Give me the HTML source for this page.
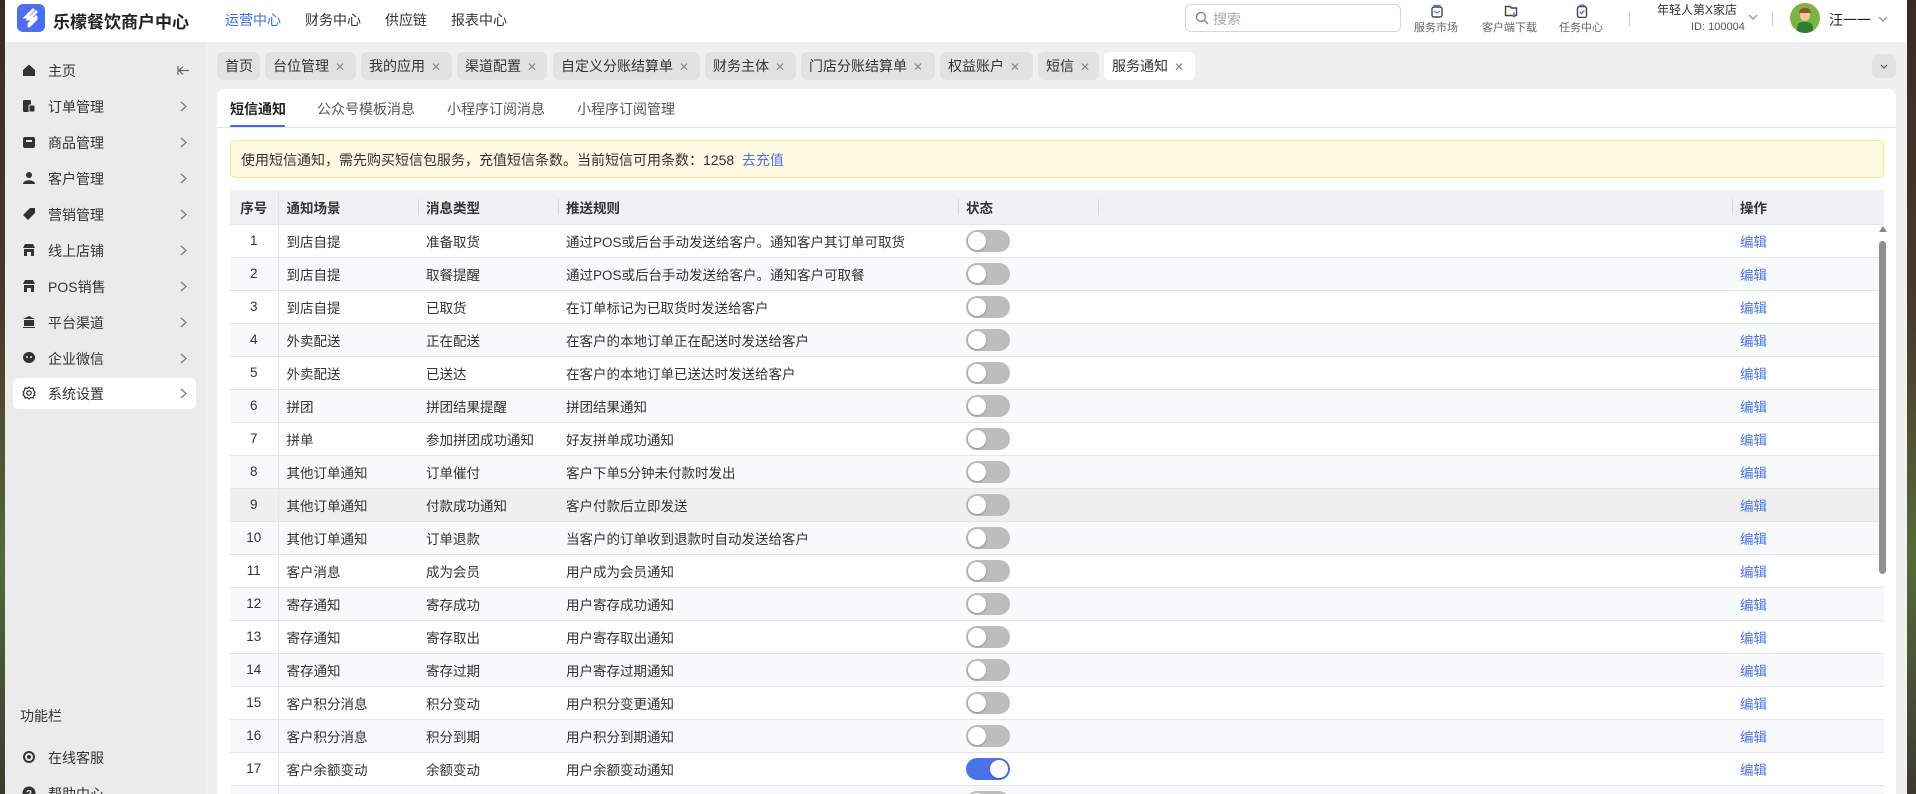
<!DOCTYPE html>
<html><head><meta charset="utf-8">
<style>
*{box-sizing:border-box;margin:0;padding:0}
body{width:1916px;height:794px;overflow:hidden;background:linear-gradient(180deg,#3a2a22,#4a3a2a 40%,#556a3a 70%,#3c3a30);font-family:"Liberation Sans","Noto Sans CJK SC",sans-serif;color:#333;position:relative}
.app{position:absolute;left:5px;top:0;width:1902px;height:794px;background:#f0f0f0;overflow:hidden}
.top{position:absolute;left:0;top:0;width:1902px;height:42px;background:#fff}
.abs{position:absolute;white-space:nowrap}
.side{position:absolute;left:0;top:42px;width:200px;height:752px;background:#ebebeb}
.mi{position:absolute;left:0;width:200px;height:31px;font-size:14px;color:#333}
.mi .ic{position:absolute;left:17px;top:8px;width:14px;height:14px}
.mi .t{position:absolute;left:43px;top:6px}
.mi .ch{position:absolute;left:175px;top:10px;width:7px;height:11px}
.tab{position:absolute;top:52px;height:28px;background:#e2e2e2;border-radius:6px;font-size:14px;line-height:28px;padding-left:8px;color:#333}
.tab .x{color:#888;font-size:12px;margin-left:6px}
.card{position:absolute;left:212px;top:89px;width:1679px;height:720px;background:#fff;border-radius:8px}
table{border-collapse:collapse;position:absolute;left:13px;top:101px;width:1654px;font-size:13.5px}
td,th{height:33px;border-bottom:1px solid #e6e6e6;text-align:left;padding-left:8px;font-weight:normal;white-space:nowrap}
th{height:34px;background:#f0f1f3;font-weight:bold;color:#333;position:relative}
th.s:before{content:"";position:absolute;left:0;top:9px;height:16px;border-left:1px solid #d8d8d8}
td.n,th.n{text-align:center;padding-left:0;border-right:1px solid #e6e6e6}
tr:nth-child(odd) td{background:#f8f9fa}
tr.h td{background:#efefef}
.sw{display:inline-block;width:44px;height:22px;border-radius:11px;background:#bdbdbd;position:relative;vertical-align:middle}
.sw:after{content:"";position:absolute;left:2px;top:2px;width:18px;height:18px;border-radius:50%;background:#fff;box-shadow:0 1px 2px rgba(0,0,0,.25)}
.sw.on{background:#4a74e6}.sw.on:after{left:24px}
.ed{color:#4a74e6}
</style></head><body>
<div class="app">
<div class="top">
  <div class="abs" style="left:12px;top:4px;width:28px;height:28px;border-radius:6px;background:#4d6ef0">
    <svg width="28" height="28" viewBox="0 0 28 28"><path d="M16 6 L9 13 L12 13 M16 15 L12 15 L19 8 M19 13 L12 20 M12 22 L19 15" stroke="#fff" stroke-width="3" fill="none" stroke-linecap="round"/></svg>
  </div>
  <div class="abs" style="left:48px;top:8px;font-size:17px;color:#222;font-weight:600">乐檬餐饮商户中心</div>
  <div class="abs" style="left:220px;top:10px;font-size:14px;color:#3d6be8">运营中心</div>
  <div class="abs" style="left:300px;top:10px;font-size:14px">财务中心</div>
  <div class="abs" style="left:380px;top:10px;font-size:14px">供应链</div>
  <div class="abs" style="left:446px;top:10px;font-size:14px">报表中心</div>
  <div class="abs" style="left:1180px;top:4px;width:216px;height:28px;border:1px solid #d6d6d6;border-radius:6px"></div>
  <svg class="abs" style="left:1190px;top:11px" width="14" height="14" viewBox="0 0 14 14"><circle cx="6" cy="6" r="4.5" stroke="#888" fill="none" stroke-width="1.4"/><path d="M9.5 9.5 L13 13" stroke="#888" stroke-width="1.4"/></svg>
  <div class="abs" style="left:1208px;top:9px;font-size:14px;color:#aaa">搜索</div>
  <svg class="abs" style="left:1425px;top:4px" width="14" height="14" viewBox="0 0 14 14"><rect x="2" y="3" width="10" height="10" rx="2" fill="none" stroke="#444" stroke-width="1.4"/><path d="M4 3 V1.5 H10 V3 M4 7 L7 9 L10 7" stroke="#4a74e6" fill="none" stroke-width="1.3"/></svg>
  <div class="abs" style="left:1409px;top:19px;font-size:11px;color:#666">服务市场</div>
  <svg class="abs" style="left:1499px;top:4px" width="14" height="14" viewBox="0 0 14 14"><path d="M1.5 2.5 H6 L7.5 4 H12.5 V11.5 H1.5 Z" fill="none" stroke="#444" stroke-width="1.4"/><path d="M10 8 V13 M8.5 11.5 L10 13 L11.5 11.5" stroke="#4a74e6" fill="none" stroke-width="1.3"/></svg>
  <div class="abs" style="left:1477px;top:19px;font-size:11px;color:#666">客户端下载</div>
  <svg class="abs" style="left:1570px;top:4px" width="14" height="14" viewBox="0 0 14 14"><rect x="2.5" y="2.5" width="9" height="11" rx="2" fill="none" stroke="#444" stroke-width="1.4"/><path d="M5 2.5 V1.2 H9 V2.5 M4.8 8 L6.5 9.6 L9.4 6.4" stroke="#4a74e6" fill="none" stroke-width="1.3"/></svg>
  <div class="abs" style="left:1554px;top:19px;font-size:11px;color:#666">任务中心</div>
  <div class="abs" style="left:1624px;top:12px;height:14px;border-left:1px solid #ccc"></div>
  <div class="abs" style="left:1652px;top:1px;font-size:12px;color:#333">年轻人第X家店</div>
  <div class="abs" style="left:1686px;top:21px;font-size:11px;color:#555">ID: 100004</div>
  <svg class="abs" style="left:1743px;top:14px" width="10" height="6" viewBox="0 0 10 6"><path d="M1 1 L5 5 L9 1" stroke="#888" fill="none" stroke-width="1.2"/></svg>
  <div class="abs" style="left:1767px;top:12px;height:14px;border-left:1px solid #ccc"></div>
  <div class="abs" style="left:1785px;top:3px;width:30px;height:30px;border-radius:50%;background:#7cb342;overflow:hidden">
    <div style="position:absolute;left:10px;top:6px;width:10px;height:12px;border-radius:5px;background:#f0c8a0"></div>
    <div style="position:absolute;left:9px;top:5px;width:12px;height:5px;border-radius:5px 5px 0 0;background:#8d5a2b"></div>
    <div style="position:absolute;left:7px;top:19px;width:16px;height:12px;border-radius:6px 6px 0 0;background:#2e7d32"></div>
  </div>
  <div class="abs" style="left:1824px;top:10px;font-size:14px;color:#222">汪一一</div>
  <svg class="abs" style="left:1873px;top:16px" width="10" height="6" viewBox="0 0 10 6"><path d="M1 1 L5 5 L9 1" stroke="#888" fill="none" stroke-width="1.2"/></svg>
</div>

<div class="side">
  <div class="mi" style="top:13px"><svg class="ic" viewBox="0 0 14 14"><path d="M1 7 L7 1.5 L13 7 V13 H1 Z" fill="#333"/></svg><span class="t">主页</span><svg class="abs" style="left:172px;top:10px" width="13" height="11" viewBox="0 0 13 11"><path d="M12 5.5 H2 M6 1.5 L2 5.5 L6 9.5 M1 1 V10" stroke="#666" fill="none" stroke-width="1.2"/></svg></div>
  <div class="mi" style="top:49px"><svg class="ic" viewBox="0 0 14 14"><rect x="1" y="1" width="8" height="12" rx="1" fill="#333"/><rect x="7" y="6" width="6" height="7" rx="1" fill="#333" stroke="#ebebeb"/></svg><span class="t">订单管理</span><svg class="ch" viewBox="0 0 7 11"><path d="M1 1 L6 5.5 L1 10" stroke="#777" fill="none" stroke-width="1.2"/></svg></div>
  <div class="mi" style="top:85px"><svg class="ic" viewBox="0 0 14 14"><rect x="1" y="2" width="12" height="11" rx="2" fill="#333"/><rect x="4" y="5" width="6" height="2" fill="#ebebeb"/></svg><span class="t">商品管理</span><svg class="ch" viewBox="0 0 7 11"><path d="M1 1 L6 5.5 L1 10" stroke="#777" fill="none" stroke-width="1.2"/></svg></div>
  <div class="mi" style="top:121px"><svg class="ic" viewBox="0 0 14 14"><circle cx="7" cy="4" r="3" fill="#333"/><path d="M1 13 C1 8 13 8 13 13 Z" fill="#333"/></svg><span class="t">客户管理</span><svg class="ch" viewBox="0 0 7 11"><path d="M1 1 L6 5.5 L1 10" stroke="#777" fill="none" stroke-width="1.2"/></svg></div>
  <div class="mi" style="top:157px"><svg class="ic" viewBox="0 0 14 14"><path d="M8 1 H13 V6 L6 13 L1 8 Z" fill="#333"/></svg><span class="t">营销管理</span><svg class="ch" viewBox="0 0 7 11"><path d="M1 1 L6 5.5 L1 10" stroke="#777" fill="none" stroke-width="1.2"/></svg></div>
  <div class="mi" style="top:193px"><svg class="ic" viewBox="0 0 14 14"><path d="M1 5 L3 1 H11 L13 5 Z M2 6 H12 V13 H2 Z" fill="#333"/><rect x="5" y="9" width="4" height="4" fill="#ebebeb"/></svg><span class="t">线上店铺</span><svg class="ch" viewBox="0 0 7 11"><path d="M1 1 L6 5.5 L1 10" stroke="#777" fill="none" stroke-width="1.2"/></svg></div>
  <div class="mi" style="top:229px"><svg class="ic" viewBox="0 0 14 14"><path d="M1 5 L3 1 H11 L13 5 Z M2 6 H12 V13 H2 Z" fill="#333"/><rect x="5" y="9" width="4" height="4" fill="#ebebeb"/></svg><span class="t">POS销售</span><svg class="ch" viewBox="0 0 7 11"><path d="M1 1 L6 5.5 L1 10" stroke="#777" fill="none" stroke-width="1.2"/></svg></div>
  <div class="mi" style="top:265px"><svg class="ic" viewBox="0 0 14 14"><path d="M7 1 L13 4 H1 Z M2 5 H12 V11 H2 Z M1 12 H13 V13 H1 Z" fill="#333"/></svg><span class="t">平台渠道</span><svg class="ch" viewBox="0 0 7 11"><path d="M1 1 L6 5.5 L1 10" stroke="#777" fill="none" stroke-width="1.2"/></svg></div>
  <div class="mi" style="top:301px"><svg class="ic" viewBox="0 0 14 14"><ellipse cx="7" cy="6.5" rx="6" ry="5.5" fill="#333"/><circle cx="5" cy="6" r="1" fill="#ebebeb"/><circle cx="9" cy="6" r="1" fill="#ebebeb"/></svg><span class="t">企业微信</span><svg class="ch" viewBox="0 0 7 11"><path d="M1 1 L6 5.5 L1 10" stroke="#777" fill="none" stroke-width="1.2"/></svg></div>
  <div class="mi" style="top:336px;left:8px;width:183px;background:#fff;border-radius:6px"><svg class="ic" style="left:9px" viewBox="0 0 14 14"><circle cx="7" cy="7" r="2.2" fill="none" stroke="#333" stroke-width="1.3"/><path d="M7 1 L8.5 2.5 L11 2 L11.5 4.5 L13 6 L12 7.5 L13 9 L11.5 10 L11 12 L8.5 11.5 L7 13 L5.5 11.5 L3 12 L2.5 10 L1 9 L2 7.5 L1 6 L2.5 4.5 L3 2 L5.5 2.5 Z" fill="none" stroke="#333" stroke-width="1.2"/></svg><span class="t" style="left:35px">系统设置</span><svg class="ch" style="left:167px" viewBox="0 0 7 11"><path d="M1 1 L6 5.5 L1 10" stroke="#777" fill="none" stroke-width="1.2"/></svg></div>
  <div class="abs" style="left:15px;top:664px;font-size:14px;color:#333">功能栏</div>
  <div class="mi" style="top:700px"><svg class="ic" viewBox="0 0 14 14"><circle cx="7" cy="7" r="5" fill="none" stroke="#333" stroke-width="2"/><circle cx="7" cy="7" r="2" fill="#333"/></svg><span class="t">在线客服</span></div>
  <div class="mi" style="top:736px"><svg class="ic" viewBox="0 0 14 14"><circle cx="7" cy="7" r="6.5" fill="#333"/><text x="7" y="11" font-size="10" fill="#ebebeb" text-anchor="middle" font-family="Liberation Sans" font-weight="bold">?</text></svg><span class="t">帮助中心</span></div>
</div>

<div class="tab" style="left:212px;width:43px">首页</div>
<div class="tab" style="left:260px;width:91px">台位管理<span class="x">✕</span></div>
<div class="tab" style="left:356px;width:91px">我的应用<span class="x">✕</span></div>
<div class="tab" style="left:452px;width:90px">渠道配置<span class="x">✕</span></div>
<div class="tab" style="left:548px;width:147px">自定义分账结算单<span class="x">✕</span></div>
<div class="tab" style="left:700px;width:91px">财务主体<span class="x">✕</span></div>
<div class="tab" style="left:796px;width:134px">门店分账结算单<span class="x">✕</span></div>
<div class="tab" style="left:935px;width:93px">权益账户<span class="x">✕</span></div>
<div class="tab" style="left:1033px;width:61px">短信<span class="x">✕</span></div>
<div class="tab" style="left:1099px;width:91px;background:#fff">服务通知<span class="x">✕</span></div>
<div class="tab" style="left:1867px;width:24px;top:54px;height:24px;padding:0"><svg style="position:absolute;left:8px;top:10px" width="8" height="5" viewBox="0 0 8 5"><path d="M1 1 L4 4 L7 1" stroke="#555" fill="none" stroke-width="1.2"/></svg></div>

<div class="card">
  <div class="abs" style="left:13px;top:10px;font-size:14px;font-weight:bold;color:#222">短信通知</div>
  <div class="abs" style="left:13px;top:36px;width:55px;height:3px;background:#3d6be8;border-radius:2px"></div>
  <div class="abs" style="left:100px;top:10px;font-size:14px;color:#555">公众号模板消息</div>
  <div class="abs" style="left:230px;top:10px;font-size:14px;color:#555">小程序订阅消息</div>
  <div class="abs" style="left:360px;top:10px;font-size:14px;color:#555">小程序订阅管理</div>
  <div class="abs" style="left:0;top:38px;width:1679px;border-top:1px solid #e5e5e5"></div>
  <div class="abs" style="left:13px;top:51px;width:1654px;height:38px;background:#fff8e2;border:1px solid #fce38a;border-radius:6px"></div>
  <div class="abs" style="left:24px;top:61px;font-size:14px;color:#333">使用短信通知，需先购买短信包服务，充值短信条数。当前短信可用条数：1258 &nbsp;<span style="color:#4a74e6">去充值</span></div>
  <table>
    <colgroup><col style="width:48px"><col style="width:140px"><col style="width:140px"><col style="width:400px"><col style="width:140px"><col style="width:634px"><col></colgroup>
    <tr><th class="n">序号</th><th>通知场景</th><th class="s">消息类型</th><th class="s">推送规则</th><th class="s">状态</th><th class="s"></th><th class="s">操作</th></tr>
    <tr><td class="n">1</td><td>到店自提</td><td>准备取货</td><td>通过POS或后台手动发送给客户。通知客户其订单可取货</td><td><span class="sw"></span></td><td></td><td class="ed">编辑</td></tr>
    <tr><td class="n">2</td><td>到店自提</td><td>取餐提醒</td><td>通过POS或后台手动发送给客户。通知客户可取餐</td><td><span class="sw"></span></td><td></td><td class="ed">编辑</td></tr>
    <tr><td class="n">3</td><td>到店自提</td><td>已取货</td><td>在订单标记为已取货时发送给客户</td><td><span class="sw"></span></td><td></td><td class="ed">编辑</td></tr>
    <tr><td class="n">4</td><td>外卖配送</td><td>正在配送</td><td>在客户的本地订单正在配送时发送给客户</td><td><span class="sw"></span></td><td></td><td class="ed">编辑</td></tr>
    <tr><td class="n">5</td><td>外卖配送</td><td>已送达</td><td>在客户的本地订单已送达时发送给客户</td><td><span class="sw"></span></td><td></td><td class="ed">编辑</td></tr>
    <tr><td class="n">6</td><td>拼团</td><td>拼团结果提醒</td><td>拼团结果通知</td><td><span class="sw"></span></td><td></td><td class="ed">编辑</td></tr>
    <tr><td class="n">7</td><td>拼单</td><td>参加拼团成功通知</td><td>好友拼单成功通知</td><td><span class="sw"></span></td><td></td><td class="ed">编辑</td></tr>
    <tr><td class="n">8</td><td>其他订单通知</td><td>订单催付</td><td>客户下单5分钟未付款时发出</td><td><span class="sw"></span></td><td></td><td class="ed">编辑</td></tr>
    <tr class="h"><td class="n">9</td><td>其他订单通知</td><td>付款成功通知</td><td>客户付款后立即发送</td><td><span class="sw"></span></td><td></td><td class="ed">编辑</td></tr>
    <tr><td class="n">10</td><td>其他订单通知</td><td>订单退款</td><td>当客户的订单收到退款时自动发送给客户</td><td><span class="sw"></span></td><td></td><td class="ed">编辑</td></tr>
    <tr><td class="n">11</td><td>客户消息</td><td>成为会员</td><td>用户成为会员通知</td><td><span class="sw"></span></td><td></td><td class="ed">编辑</td></tr>
    <tr><td class="n">12</td><td>寄存通知</td><td>寄存成功</td><td>用户寄存成功通知</td><td><span class="sw"></span></td><td></td><td class="ed">编辑</td></tr>
    <tr><td class="n">13</td><td>寄存通知</td><td>寄存取出</td><td>用户寄存取出通知</td><td><span class="sw"></span></td><td></td><td class="ed">编辑</td></tr>
    <tr><td class="n">14</td><td>寄存通知</td><td>寄存过期</td><td>用户寄存过期通知</td><td><span class="sw"></span></td><td></td><td class="ed">编辑</td></tr>
    <tr><td class="n">15</td><td>客户积分消息</td><td>积分变动</td><td>用户积分变更通知</td><td><span class="sw"></span></td><td></td><td class="ed">编辑</td></tr>
    <tr><td class="n">16</td><td>客户积分消息</td><td>积分到期</td><td>用户积分到期通知</td><td><span class="sw"></span></td><td></td><td class="ed">编辑</td></tr>
    <tr><td class="n">17</td><td>客户余额变动</td><td>余额变动</td><td>用户余额变动通知</td><td><span class="sw on"></span></td><td></td><td class="ed">编辑</td></tr>
    <tr><td class="n">18</td><td>客户余额变动</td><td>余额变动</td><td>用户余额变动通知</td><td><span class="sw"></span></td><td></td><td class="ed">编辑</td></tr>
  </table>
  <div class="abs" style="left:1662px;top:137px;width:0;height:0;border-left:4px solid transparent;border-right:4px solid transparent;border-bottom:6px solid #888"></div>
  <div class="abs" style="left:1662px;top:152px;width:7px;height:333px;background:#909090;border-radius:4px"></div>
</div>
</div>
</body></html>
